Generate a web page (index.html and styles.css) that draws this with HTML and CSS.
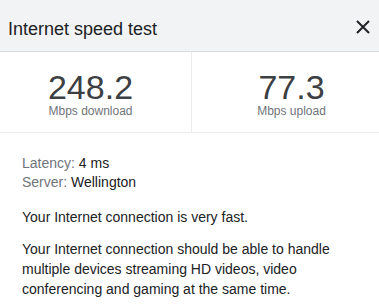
FILE: index.html
```html
<!DOCTYPE html>
<html>
<head>
<meta charset="utf-8">
<link rel="stylesheet" href="styles.css">
</head>
<body>
<div class="panel">
  <header class="header">
    <h1 class="title">Internet speed test</h1>
    <button class="close" aria-label="Close">
      <svg width="14" height="14" viewBox="0 0 14 14"><path d="M1 1L13 13M13 1L1 13" stroke="#202124" stroke-width="2" fill="none"/></svg>
    </button>
  </header>
  <section class="stats">
    <div class="stat stat-left">
      <div class="value">248.2</div>
      <div class="unit">Mbps download</div>
    </div>
    <div class="stat stat-right">
      <div class="value">77.3</div>
      <div class="unit">Mbps upload</div>
    </div>
  </section>
  <section class="details">
    <div class="meta">
      <div><span class="label">Latency:</span> 4 ms</div>
      <div><span class="label">Server:</span> Wellington</div>
    </div>
    <p class="para">Your Internet connection is very fast.</p>
    <p class="para">Your Internet connection should be able to handle multiple devices streaming HD videos, video conferencing and gaming at the same time.</p>
  </section>
</div>
</body>
</html>
```

FILE: styles.css
```css
html, body {
  margin: 0;
  padding: 0;
  background: #ffffff;
}
body {
  font-family: "Liberation Sans", Arial, sans-serif;
  color: #202124;
  width: 379px;
  height: 307px;
  overflow: hidden;
}
.header {
  height: 52px;
  box-sizing: border-box;
  background: #f1f3f4;
  border-bottom: 1px solid #dcdcdc;
  display: flex;
  justify-content: space-between;
  align-items: flex-start;
  padding: 19px 9px 0 8px;
}
.title {
  margin: 0;
  font-size: 18px;
  font-weight: normal;
  line-height: 21px;
  color: #202124;
}
.close {
  border: 0;
  background: transparent;
  padding: 0;
  margin-top: 1px;
  width: 14px;
  height: 14px;
  display: flex;
}
.stats {
  display: grid;
  grid-template-columns: 192px 1fr;
  border-bottom: 1px solid #ececec;
}
.stat {
  text-align: center;
  padding: 18px 0 14px;
}
.stat-left {
  border-right: 1px solid #ececec;
  padding-right: 10px;
}
.stat-right {
  padding-left: 12px;
}
.value {
  font-size: 34px;
  line-height: 34px;
  color: #3c4043;
}
.unit {
  font-size: 12px;
  line-height: 14px;
  color: #70757a;
}
.details {
  padding: 21px 22px 0;
  font-size: 14px;
}
.meta {
  line-height: 19px;
  color: #202124;
}
.label {
  color: #70757a;
}
.para {
  margin: 15px 0 0;
  line-height: 20px;
  color: #202124;
}
.para + .para {
  margin-top: 12px;
}
```
